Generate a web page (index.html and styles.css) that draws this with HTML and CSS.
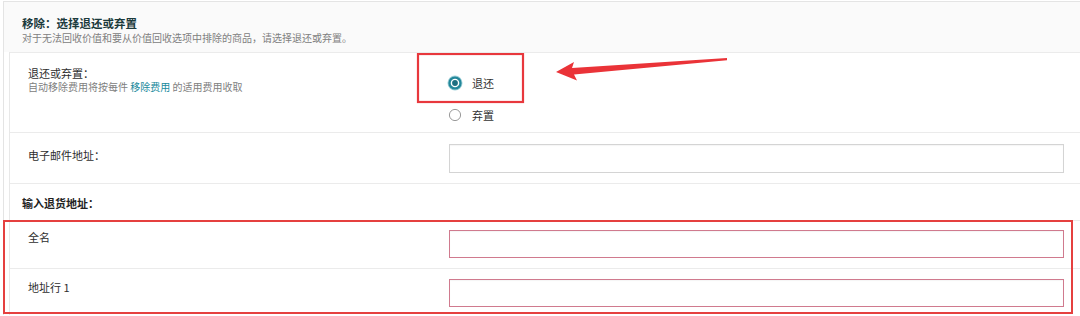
FILE: index.html
```html
<!DOCTYPE html>
<html lang="zh-CN">
<head>
<meta charset="utf-8">
<link rel="stylesheet" href="styles.css">
</head>
<body>
<div class="panel">
  <div class="head">
    <div class="head-title">移除：选择退还或弃置</div>
    <div class="head-sub">对于无法回收价值和要从价值回收选项中排除的商品，请选择退还或弃置。</div>
  </div>
  <div class="rows">
    <div class="row row-choice">
      <div class="label-cell">
        <div class="label">退还或弃置：</div>
        <div class="desc">自动移除费用将按每件 <span class="link">移除费用</span> 的适用费用收取</div>
      </div>
      <div class="control-cell radios">
        <div class="radio-line">
          <svg class="radio" width="16" height="16" viewBox="0 0 16 16"><circle cx="8" cy="8" r="7.5" fill="#9fd0d8"/><circle cx="8" cy="8" r="6.6" fill="#23879a"/><circle cx="8" cy="8" r="4.3" fill="#fff"/><circle cx="8" cy="8" r="2.9" fill="#1d6e80"/></svg>
          <span class="radio-text">退还</span>
        </div>
        <div class="radio-line">
          <svg class="radio" width="16" height="16" viewBox="0 0 16 16"><circle cx="8" cy="8" r="5.6" fill="#fff" stroke="#9a9a9a" stroke-width="1"/></svg>
          <span class="radio-text">弃置</span>
        </div>
        <svg class="annot" width="330" height="55" viewBox="0 0 330 55">
          <rect x="9" y="1" width="105" height="48" fill="none" stroke="#e8383d" stroke-width="2.2"/>
          <polygon points="147,19 165,9 163,15 318,5 318,7.2 165,21.5 168,27.5" fill="#ea3338"/>
        </svg>
      </div>
    </div>
    <div class="row row-email">
      <div class="label-cell"><div class="label">电子邮件地址：</div></div>
      <div class="control-cell"><div class="input"></div></div>
    </div>
    <div class="row row-section">
      <div class="section-label">输入退货地址：</div>
    </div>
    <div class="highlight">
      <div class="row row-name">
        <div class="label-cell"><div class="label">全名</div></div>
        <div class="control-cell"><div class="input input-red"></div></div>
      </div>
      <div class="row row-addr">
        <div class="label-cell"><div class="label">地址行 1</div></div>
        <div class="control-cell"><div class="input input-red"></div></div>
      </div>
    </div>
  </div>
</div>
</body>
</html>
```

FILE: styles.css
```css
* { box-sizing: border-box; }
html, body { margin: 0; padding: 0; background: #fff; }
body {
  font-family: "Noto Sans CJK SC", "Noto Sans", sans-serif;
  color: #333;
  width: 1080px;
  height: 316px;
  overflow: hidden;
}
.panel {
  margin: 1px 0 0 3px;
  border-top: 1px solid #e4e4e4;
  border-left: 1px solid #e4e4e4;
}
.head {
  background: #fafafa;
  height: 50px;
  padding: 14px 0 0 18px;
}
.head-title {
  font-size: 11.5px;
  line-height: 15px;
  font-weight: 700;
  color: #1c3b3d;
}
.head-sub {
  font-size: 10px;
  line-height: 14px;
  color: #808080;
}
.rows {
  margin-left: 5px;
  border-left: 1px solid #e8e8e8;
}
.row {
  display: grid;
  grid-template-columns: 439px 615px;
  border-top: 1px solid #ebebeb;
}
.label-cell { padding-left: 18px; }
.label {
  font-size: 11px;
  line-height: 14px;
  color: #2e2e2e;
}
.desc {
  font-size: 10px;
  line-height: 14px;
  color: #808080;
}
.link { color: #1a8a9c; }
.control-cell { position: relative; }

.row-choice { height: 80px; }
.row-choice .label-cell { padding-top: 13px; }
.radios { padding-top: 14px; margin-left: -2px; }
.radio-line {
  display: flex;
  align-items: center;
  height: 32px;
  gap: 9px;
}
.radio { display: block; flex: none; }
.radio-text { font-size: 11px; color: #333; }
.annot {
  position: absolute;
  left: -38px;
  top: 0;
}

.input {
  height: 29px;
  border: 1px solid #d4d4d4;
  background: #fff;
  box-shadow: inset 0 1px 1px rgba(0,0,0,0.04);
}
.input-red { border-color: #d07a8e; height: 28px; }

.row-email { height: 51px; }
.row-email .label-cell { padding-top: 15px; }
.row-email .control-cell { padding-top: 11px; }

.row-section { height: 37px; display: block; padding: 12px 0 0 12px; }
.section-label {
  font-size: 11px;
  line-height: 14px;
  font-weight: 700;
  color: #222;
}

.highlight { position: relative; }
.highlight::after {
  content: "";
  position: absolute;
  left: -7px;
  right: 7px;
  top: 0;
  bottom: 1px;
  border: 2px solid #e5403f;
  pointer-events: none;
}
.row-name { height: 48px; }
.row-name .label-cell { padding-top: 9px; }
.row-name .control-cell { padding-top: 9px; }
.row-addr { height: 47px; }
.row-addr .label-cell { padding-top: 11px; }
.row-addr .control-cell { padding-top: 10px; }
```
